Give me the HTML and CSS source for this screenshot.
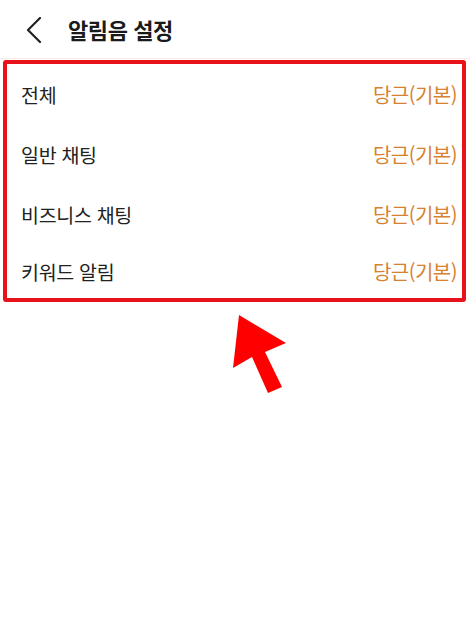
FILE: index.html
```html
<!DOCTYPE html>
<html lang="ko">
<head>
<meta charset="utf-8">
<title>알림음 설정</title>
<link rel="stylesheet" href="styles.css">
</head>
<body>
<div class="screen">
  <header class="header">
    <svg class="back" width="16" height="26" viewBox="0 0 16 26"><path d="M14 1 L2 13 L14 25" fill="none" stroke="#222" stroke-width="2.2" stroke-linecap="round" stroke-linejoin="round"/></svg>
    <h1 class="title">알림음 설정</h1>
  </header>
  <ul class="list">
    <li class="row"><span class="label">전체</span><span class="value">당근(기본)</span></li>
    <li class="row"><span class="label">일반 채팅</span><span class="value">당근(기본)</span></li>
    <li class="row"><span class="label">비즈니스 채팅</span><span class="value">당근(기본)</span></li>
    <li class="row"><span class="label">키워드 알림</span><span class="value">당근(기본)</span></li>
  </ul>
  <svg class="arrow" width="470" height="643" viewBox="0 0 470 643"><polygon points="239,315 286,343 265,352 282,387 268,393 252,357 233,368" fill="#ff0000"/></svg>
</div>
</body>
</html>
```
FILE: styles.css
```css
* { box-sizing: border-box; }
html, body { margin: 0; padding: 0; background: #fff; }
body { font-family: "Noto Sans CJK KR", "Noto Sans", sans-serif; color: #222; }
.screen { position: relative; width: 470px; height: 643px; overflow: hidden; }
.header { height: 59px; display: flex; align-items: center; padding: 0 0 0 26px; gap: 26px; border-bottom: 1px solid #f7e9e9; }
.back { display: block; margin-top: 2px; }
.title { margin: 0; font-size: 22px; font-weight: 700; color: #1a1a1a; letter-spacing: -0.4px; }
.list { list-style: none; margin: 1px 4px 0 3px; padding: 0; border: 4px solid #e8121a; border-radius: 3px; height: 242px; }
.row { height: 60px; display: flex; align-items: center; justify-content: space-between; padding: 0 5px 0 14px; }
.row:last-child { height: 54px; }
.label { font-size: 19.5px; color: #222; letter-spacing: -0.3px; }
.value { font-size: 20px; color: #d6822f; letter-spacing: -0.5px; }
.arrow { position: absolute; left: 0; top: 0; pointer-events: none; }
```
